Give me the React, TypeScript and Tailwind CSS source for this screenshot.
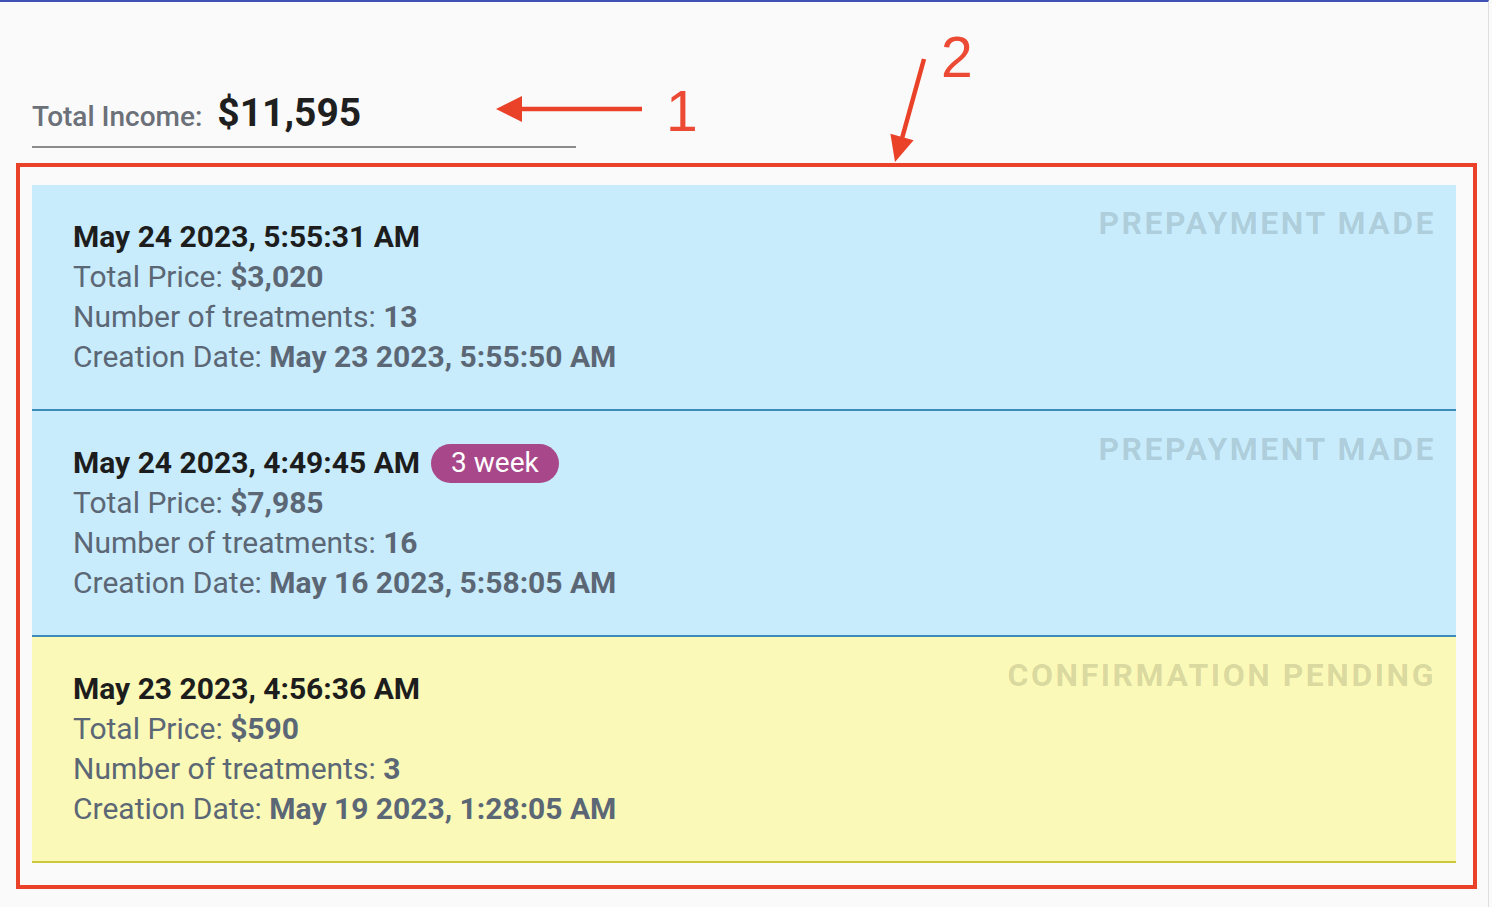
import React from "react";

type Order = {
  date: string;
  price: string;
  treatments: number;
  created: string;
  status: string;
  tone: "blue" | "yellow";
  badge?: string;
};

const ORDERS: Order[] = [
  {
    date: "May 24 2023, 5:55:31 AM",
    price: "$3,020",
    treatments: 13,
    created: "May 23 2023, 5:55:50 AM",
    status: "PREPAYMENT MADE",
    tone: "blue",
  },
  {
    date: "May 24 2023, 4:49:45 AM",
    price: "$7,985",
    treatments: 16,
    created: "May 16 2023, 5:58:05 AM",
    status: "PREPAYMENT MADE",
    tone: "blue",
    badge: "3 week",
  },
  {
    date: "May 23 2023, 4:56:36 AM",
    price: "$590",
    treatments: 3,
    created: "May 19 2023, 1:28:05 AM",
    status: "CONFIRMATION PENDING",
    tone: "yellow",
  },
];

function OrderCard({ order }: { order: Order }) {
  const toneClass =
    order.tone === "blue"
      ? "bg-[#c8ecfc] border-[#3d8bb8]"
      : "bg-[#faf9b7] border-[#cdc73b]";

  return (
    <div className={`flex justify-between border-b-2 ${toneClass}`}>
      <div className="py-[32px] pl-[41px] text-[30px] leading-[40px] text-[#5c6776]">
        <div className="flex items-center gap-[11px]">
          <span className="font-bold text-[#1d1d1d]">{order.date}</span>
          {order.badge && (
            <span className="flex h-[39px] items-center rounded-full bg-[#a8488a] px-[20px] text-[28px] text-white">
              {order.badge}
            </span>
          )}
        </div>
        <div>
          Total Price: <span className="font-bold">{order.price}</span>
        </div>
        <div>
          Number of treatments: <span className="font-bold">{order.treatments}</span>
        </div>
        <div>
          Creation Date: <span className="font-bold">{order.created}</span>
        </div>
      </div>
      {/* status label */}
      <div className="pt-[22px] pr-[20px] text-[32px] font-bold leading-none tracking-[2.5px] text-black/15">
        {order.status}
      </div>
    </div>
  );
}

function Annotations() {
  return (
    <>
      {/* red frame around the list */}
      <div className="pointer-events-none absolute left-[16px] top-[163px] h-[726px] w-[1461px] border-4 border-[#ea4229]" />
      <svg
        className="pointer-events-none absolute inset-0"
        width="1492"
        height="907"
        viewBox="0 0 1492 907"
      >
        <line x1="642" y1="109" x2="516" y2="109" stroke="#ea4229" strokeWidth="4.5" />
        <polygon points="496,109 522,96 522,122" fill="#ea4229" />
        <line x1="924" y1="59" x2="901" y2="142" stroke="#ea4229" strokeWidth="4.5" />
        <polygon points="895,162 913.6,140.3 890.4,133.7" fill="#ea4229" />
      </svg>
      <span
        className="pointer-events-none absolute left-[666px] top-[83px] text-[57px] leading-none text-[#ec4a34]"
        style={{ fontFamily: '"Liberation Sans", Arial, sans-serif' }}
      >
        1
      </span>
      <span
        className="pointer-events-none absolute left-[941px] top-[29px] text-[57px] leading-none text-[#ec4a34]"
        style={{ fontFamily: '"Liberation Sans", Arial, sans-serif' }}
      >
        2
      </span>
    </>
  );
}

export default function App() {
  return (
    <div className="relative h-[907px] w-[1492px] overflow-hidden bg-[#fafafa] font-['Roboto',sans-serif]">
      <div className="h-full w-[1489px] border-r border-t-2 border-r-[#dedede] border-t-[#3f51b5]">
        {/* total income */}
        <div className="ml-[32px] mt-[92px] flex w-[544px] items-baseline gap-[15px] border-b-2 border-[#8c8c8c] pb-[8px]">
          <span className="text-[28px] font-medium text-[#6b7079]">Total Income:</span>
          <span className="text-[39px] font-bold leading-none text-[#1f1f1f]">$11,595</span>
        </div>

        {/* orders */}
        <div className="ml-[32px] mt-[37px] w-[1424px]">
          {ORDERS.map((o) => (
            <OrderCard key={o.date} order={o} />
          ))}
        </div>
      </div>
      <Annotations />
    </div>
  );
}
